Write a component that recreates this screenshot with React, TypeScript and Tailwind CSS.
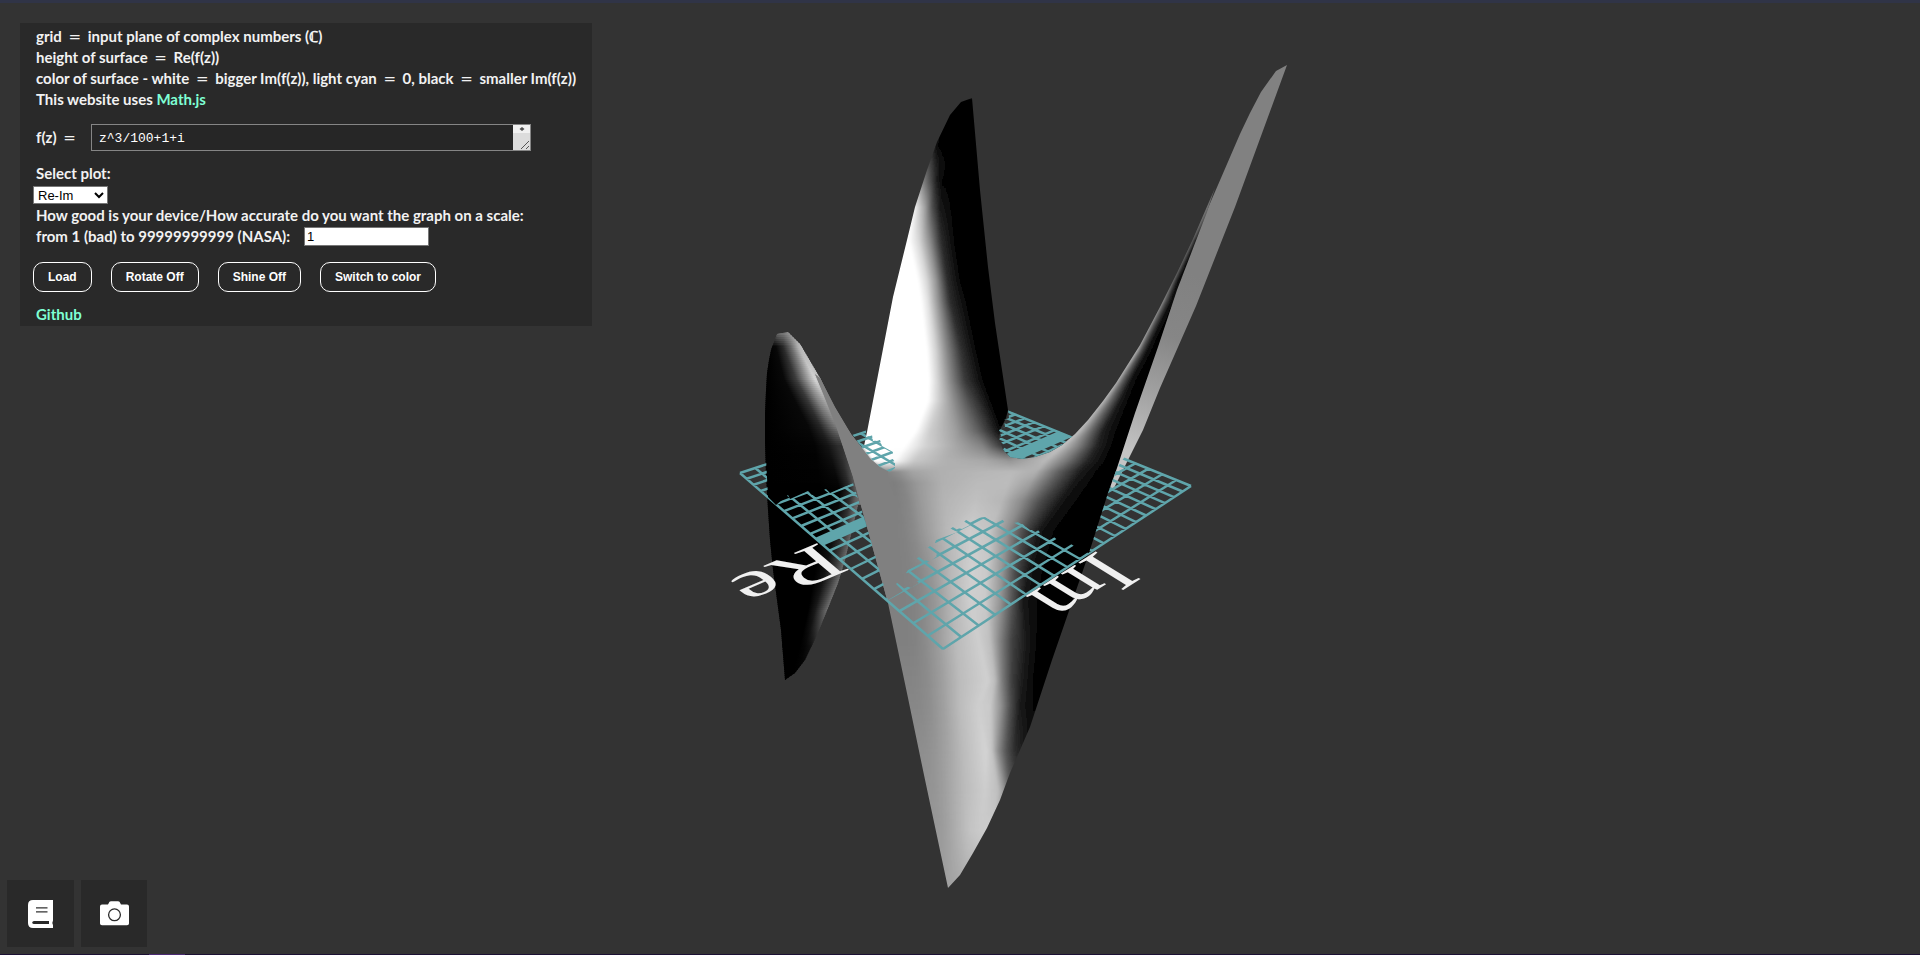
import { useMemo, useState } from "react";

type Stop = [number, number];
type Row = [number, Stop[]];

// Brightness of the surface along horizontal slices: [y, [[x, grey], ...]]
const bodyRows: Row[] = [
  [98, [[930, 0], [931, 0], [932, 0], [940, 0], [950, 0], [960, 0], [970, 0], [980, 0], [1280, 0], [1290, 0], [1300, 0], [1310, 0]]],
  [145, [[915, 0], [925, 20], [928, 20], [935, 18], [939, 3], [944, 0], [955, 0], [965, 0], [1232, 128], [1237, 110], [1242, 60], [1252, 30]]],
  [180, [[890, 120], [900, 120], [905, 120], [924, 125], [932, 65], [937, 25], [943, 3], [952, 0], [1212, 128], [1216, 110], [1220, 60], [1226, 30]]],
  [207, [[880, 240], [900, 240], [905, 250], [915, 238], [925, 160], [932, 80], [940, 25], [954, 0], [1205, 128], [1208, 110], [1211, 60], [1216, 30]]],
  [240, [[870, 255], [880, 255], [890, 255], [909, 255], [919, 215], [930, 140], [941, 45], [956, 0], [1189, 140], [1192, 100], [1195, 30], [1199, 0]]],
  [280, [[870, 255], [880, 255], [890, 255], [918, 255], [927, 215], [936, 150], [947, 45], [962, 0], [1170, 170], [1174, 80], [1177, 20], [1182, 0]]],
  [300, [[870, 255], [875, 255], [885, 255], [921, 255], [928, 225], [939, 140], [950, 45], [968, 0], [1161, 180], [1165, 90], [1170, 20], [1176, 0]]],
  [350, [[860, 255], [870, 255], [880, 255], [927, 255], [936, 210], [947, 135], [961, 50], [978, 0], [1136, 190], [1140, 95], [1146, 20], [1153, 0]]],
  [380, [[810, 128], [845, 128], [846, 255], [929, 255], [937, 215], [949, 145], [965, 58], [985, 0], [1116, 195], [1122, 100], [1130, 20], [1138, 0]]],
  [400, [[820, 128], [848, 128], [849, 255], [928, 255], [938, 210], [953, 145], [970, 75], [992, 0], [1102, 195], [1110, 105], [1120, 25], [1130, 0]]],
  [430, [[830, 128], [850, 128], [851, 255], [916, 255], [930, 205], [955, 160], [977, 100], [1001, 8], [1078, 195], [1090, 110], [1103, 30], [1119, 0]]],
  [445, [[835, 128], [861, 128], [862, 255], [905, 255], [926, 210], [952, 172], [983, 130], [1001, 60], [1062, 195], [1079, 125], [1097, 35], [1114, 0]]],
  [460, [[845, 128], [872, 128], [873, 255], [895, 250], [914, 200], [945, 177], [985, 168], [1010, 150], [1045, 185], [1066, 120], [1088, 35], [1108, 0]]],
  [471, [[850, 128], [886, 128], [889, 132], [897, 140], [912, 163], [942, 176], [980, 182], [1012, 186], [1036, 175], [1057, 100], [1080, 28], [1100, 0]]],
  [482, [[852, 128], [888, 128], [894, 126], [902, 132], [917, 152], [942, 176], [978, 186], [1008, 188], [1030, 160], [1052, 88], [1074, 22], [1094, 0]]],
  [500, [[858, 128], [892, 128], [898, 128], [908, 134], [922, 155], [944, 180], [976, 192], [1002, 182], [1022, 138], [1042, 72], [1062, 20], [1082, 0]]],
  [530, [[866, 128], [896, 128], [904, 130], [914, 138], [926, 155], [946, 183], [970, 205], [990, 196], [1008, 142], [1024, 72], [1040, 20], [1060, 0]]],
  [570, [[878, 128], [900, 128], [910, 130], [920, 136], [932, 150], [950, 183], [972, 208], [987, 202], [1002, 150], [1015, 75], [1030, 20], [1048, 0]]],
  [600, [[888, 128], [904, 128], [914, 130], [924, 137], [936, 152], [952, 181], [970, 206], [985, 203], [1000, 150], [1012, 85], [1023, 24], [1042, 0]]],
  [640, [[896, 128], [906, 128], [915, 130], [925, 138], [938, 155], [956, 186], [979, 206], [990, 190], [1001, 125], [1012, 65], [1027, 24], [1040, 0]]],
  [680, [[904, 132], [910, 132], [918, 134], [928, 140], [942, 158], [960, 188], [988, 208], [995, 188], [1002, 125], [1012, 62], [1022, 28], [1036, 0]]],
  [705, [[908, 135], [914, 135], [920, 136], [930, 142], [944, 160], [960, 188], [978, 206], [990, 202], [1001, 145], [1010, 80], [1020, 25], [1034, 5]]],
  [750, [[916, 140], [922, 142], [928, 144], [936, 150], [948, 164], [964, 188], [986, 212], [992, 195], [998, 140], [1006, 85], [1014, 48], [1026, 18]]],
  [790, [[924, 145], [930, 147], [936, 150], [944, 158], [954, 172], [966, 188], [985, 205], [998, 190], [1004, 150], [1010, 90], [1018, 60], [1026, 30]]],
  [830, [[930, 150], [936, 152], [942, 155], [950, 165], [960, 180], [970, 195], [980, 202], [990, 205], [1000, 205], [1010, 205], [1018, 205], [1026, 205]]],
  [888, [[940, 158], [943, 160], [946, 160], [950, 162], [956, 164], [962, 168], [970, 172], [980, 180], [990, 180], [1000, 180], [1018, 180], [1026, 180]]],
];

const petalRows: Row[] = [
  [331, [[773, 60], [778, 115], [784, 130], [789, 150], [795, 170], [802, 180]]],
  [346, [[768, 0], [776, 8], [783, 40], [791, 105], [798, 175], [804, 200]]],
  [378, [[768, 0], [784, 8], [796, 60], [807, 150], [815, 215], [820, 190]]],
  [400, [[768, 0], [795, 8], [808, 55], [818, 130], [825, 165], [830, 135]]],
  [425, [[768, 0], [808, 8], [820, 38], [829, 90], [835, 120], [839, 128]]],
  [445, [[768, 0], [815, 3], [828, 20], [838, 45], [843, 50], [848, 60]]],
  [490, [[768, 0], [820, 0], [840, 2], [850, 40], [856, 90], [862, 120]]],
  [530, [[768, 0], [820, 0], [835, 15], [845, 55], [852, 100], [858, 120]]],
  [570, [[768, 0], [815, 0], [825, 15], [834, 55], [841, 100], [846, 125]]],
  [610, [[768, 0], [808, 0], [815, 25], [822, 75], [827, 110], [830, 120]]],
  [645, [[768, 0], [800, 0], [805, 5], [810, 15], [814, 30], [818, 40]]],
  [682, [[768, 0], [790, 0], [795, 0], [800, 0], [810, 0], [818, 0]]],
];

const STEP = 2;

// Keeps a dark stretch dark up to the next bright edge
function holdDark(stops: Stop[]): Stop[] {
  return stops.flatMap((s, i) => {
    const next = stops[i + 1];
    return next && s[1] < 15 && next[0] - s[0] > 60 ? [s, [next[0] - 12, s[1]] as Stop] : [s];
  });
}

function ShadedRows({ id, rows, x1, x2 }: { id: string; rows: Row[]; x1: number; x2: number }) {
  const strips = useMemo(() => {
    const out: { y: number; stops: Stop[] }[] = [];
    for (let k = 0; k < rows.length - 1; k++) {
      const [ya, a] = rows[k];
      const [yb, b] = rows[k + 1];
      for (let y = ya; y < yb; y += STEP) {
        const t = (y - ya) / (yb - ya);
        out.push({
          y,
          stops: holdDark(a.map(([x, g], i) => [x + (b[i][0] - x) * t, g + (b[i][1] - g) * t] as Stop)),
        });
      }
    }
    return out;
  }, [rows]);
  return (
    <g shapeRendering="crispEdges">
      {strips.map(({ y, stops }) => (
        <g key={y}>
          <linearGradient id={`${id}-${y}`} gradientUnits="userSpaceOnUse" x1={x1} x2={x2} y1={0} y2={0}>
            {stops.map(([x, g], i) => {
              const v = Math.round(g);
              return <stop key={i} offset={(x - x1) / (x2 - x1)} stopColor={`rgb(${v},${v},${v})`} />;
            })}
          </linearGradient>
          <rect x={x1} y={y} width={x2 - x1} height={STEP + 1} fill={`url(#${id}-${y})`} />
        </g>
      ))}
    </g>
  );
}

// Corners of the input plane on screen: near, right, far, left
const P: Stop[] = [[943, 649], [1191, 486], [972, 397], [740, 473]];

function project(u: number, v: number): Stop {
  const [[x0, y0], [x1, y1], [x2, y2], [x3, y3]] = P;
  const dx1 = x1 - x2, dx2 = x3 - x2, sx = x0 - x1 + x2 - x3;
  const dy1 = y1 - y2, dy2 = y3 - y2, sy = y0 - y1 + y2 - y3;
  const det = dx1 * dy2 - dx2 * dy1;
  const g = (sx * dy2 - dx2 * sy) / det;
  const h = (dx1 * sy - sx * dy1) / det;
  const w = g * u + h * v + 1;
  return [
    ((x1 - x0 + g * x1) * u + (x3 - x0 + h * x3) * v + x0) / w,
    ((y1 - y0 + g * y1) * u + (y3 - y0 + h * y3) * v + y0) / w,
  ];
}

const CELLS = 20;

function Grid() {
  const ticks = Array.from({ length: CELLS + 1 }, (_, i) => i / CELLS);
  const seg = (a: Stop, b: Stop) => `M${a[0].toFixed(1)} ${a[1].toFixed(1)}L${b[0].toFixed(1)} ${b[1].toFixed(1)}`;
  const d = ticks.map((t) => seg(project(t, 0), project(t, 1)) + seg(project(0, t), project(1, t))).join("");
  const axis = [project(0, 0.48), project(1, 0.47), project(1, 0.535), project(0, 0.525)].join(" ");
  return (
    <g clipPath="url(#grid-visible)">
      <path d={d} fill="none" stroke="#5fa5ab" strokeWidth="2.5" />
      <polygon points={axis} fill="#5fa5ab" />
    </g>
  );
}

function Plot() {
  return (
    <svg viewBox="0 0 1920 955" className="absolute inset-0 h-full w-full" role="img" aria-label="Surface plot">
      <defs>
        <clipPath id="petal">
          <polygon points="785,680 781,630 777,600 773,570 770,540 768,510 766,475 765,443 765,413 766,390 767,373 769,360 771,350 777,334 788,332 800,344 820,378 837,413 850,433 880,500 858,505 845,560 838,583 830,603 817,635 805,660 795,673" />
        </clipPath>
        <clipPath id="body">
          <polygon points="948,888 924,775 908,698 888,603 867,527 853,477 835,423 823,393 815,374 820,378 835,407 851,434 862,448 864,446 867,432 893,297 907,240 915,207 927,170 937,142 950,115 961,102 972,98 980,190 988,267 995,323 1008,410 1006,418 1001,428 999,438 1003,450 1010,457 1022,459 1035,457 1050,452 1062,445 1075,434 1088,420 1103,401 1116,383 1140,345 1160,307 1177,273 1193,239 1215,188 1207,212 1197,238 1177,290 1158,347 1135,413 1117,468 1108,493 1089,553 1052,660 1030,727 1010,773 1000,800 987,828 973,853 960,875" />
        </clipPath>
        <clipPath id="grid-visible">
          <path d="M734 474L766 458L768 497L776 505L788 495L790 499L808 491L812 495L826 489L830 493L853 483L867 527L888 600L903 591L896 584L898 582L911 588L919 583L906 573L908 570L922 563L916 559L919 557L930 562L937 556L927 548L930 546L942 550L948 545L935 543L936 540L958 532L950 529L953 527L962 529L970 525L964 522L966 520L976 518L985 517L992 521L1002 519L1006 524L1020 522L1030 530L1038 530L1044 537L1054 537L1062 544L1071 544L1080 550L1089 553L1108 493L1117 468L1126 455L1196 480L1196 492L943 653Z" />
          <polygon points="852,434 866,430 866,437 872,435 873,441 880,440 882,446 893,452 892,458 895,462 895,468 890,472 880,467 870,458 862,448" />
          <polygon points="1008,410 1075,434 1062,445 1050,452 1035,457 1022,459 1010,457 1003,450 1005,446 999,440 1001,436 999,430 1005,427 1004,420 1009,418" />
        </clipPath>
        <clipPath id="ridge">
          <polygon points="805,360 820,378 835,407 851,434 862,448 870,458 880,467 888,471 888,500 888,603 860,600" />
        </clipPath>
        <linearGradient id="sheet" gradientUnits="userSpaceOnUse" x1="1180" y1="270" x2="1120" y2="450">
          <stop offset="0" stopColor="#818181" />
          <stop offset="0.35" stopColor="#868686" />
          <stop offset="0.65" stopColor="#a0a0a0" />
          <stop offset="1" stopColor="#c4c4c4" />
        </linearGradient>
        <filter id="soft" x="-5%" y="-5%" width="110%" height="110%">
          <feGaussianBlur stdDeviation="1.2" />
        </filter>
      </defs>

      <polygon points="1287,65 1276,71 1261,92 1250,113 1240,134 1221,178 1205,215 1180,275 1150,340 1130,400 1105,480 1113,490 1128,460 1143,430 1160,388 1196,306 1235,207" fill="url(#sheet)" />

      <g clipPath="url(#petal)">
        <ShadedRows id="pr" rows={petalRows} x1={760} x2={885} />
      </g>

      <g clipPath="url(#body)">
        <g filter="url(#soft)">
          <ShadedRows id="br" rows={bodyRows} x1={800} x2={1320} />
        </g>
        <polygon points="810,365 820,378 835,407 851,434 862,448 870,458 880,467 893,473 903,490 905,530 900,600 860,600 853,477 835,423" fill="#808080" clipPath="url(#ridge)" />
      </g>

      <Grid />

      <g fill="#f0f0f0" fontFamily="'Liberation Serif', serif" fontSize="60">
        <text transform="matrix(-1.1 0.7 -1.14 -0.7 1098 550)">Im</text>
        <text transform="matrix(-1.42 0.6 -0.8 -0.68 820 542)">Re</text>
      </g>
    </svg>
  );
}

function Eq() {
  return <span className="mx-[3px] font-['DejaVu_Sans',sans-serif] leading-none font-normal">=</span>;
}

const outlined =
  "h-[30px] rounded-[10px] border border-white px-[14px] text-[12px] font-bold leading-none text-white hover:bg-white/10";

export default function App() {
  const [rotate, setRotate] = useState(true);
  const [shine, setShine] = useState(true);
  const [grey, setGrey] = useState(true);
  return (
    <div className="relative flex min-h-screen flex-col overflow-hidden bg-[#333333] font-['Liberation_Sans',sans-serif] text-white">
      <Plot />
      <div className="relative h-[3px] bg-[#303447]" />

      <section className="relative mt-5 ml-5 flex w-[572px] flex-col items-start bg-[#292929] pt-[3px] pb-[1px] font-['Lato',sans-serif] text-[15px] leading-[21px] font-bold text-[#f2f2f2]">
        <div className="pl-4 whitespace-nowrap">
          <p>grid <Eq /> input plane of complex numbers (ℂ)</p>
          <p>height of surface <Eq /> Re(f(z))</p>
          <p>color of surface - white <Eq /> bigger Im(f(z)), light cyan <Eq /> 0, black <Eq /> smaller Im(f(z))</p>
          <p>
            This website uses{" "}
            <a href="https://mathjs.org" className="text-[#7fffd4]">Math.js</a>
          </p>
        </div>

        <div className="mt-[14px] flex items-center pl-4">
          <label htmlFor="fn" className="w-[55px]">f(z) <Eq /></label>
          <div className="relative flex">
            <textarea
              id="fn"
              rows={1}
              defaultValue="z^3/100+1+i"
              className="h-[27px] w-[440px] resize-none overflow-hidden border border-[#858585] bg-[#262626] px-[7px] pt-[6px] font-['Liberation_Mono',monospace] text-[13px] leading-4 font-normal text-white"
            />
            <div className="absolute inset-y-px right-px flex w-[17px] flex-col bg-[#dcdcdc]">
              <div className="h-2 bg-[#f1f1f1]" />
              <svg viewBox="0 0 17 25" className="absolute inset-0 h-full w-full" aria-hidden="true">
                <path d="M6.5 4L9 2L11.5 4L9 6Z" fill="#505050" />
                <path d="M8 24L16 16M13 24L16 21" stroke="#555" strokeWidth="1" />
              </svg>
            </div>
          </div>
        </div>

        <label htmlFor="plot" className="mt-3 pl-4">Select plot:</label>
        <select
          id="plot"
          className="mt-[2px] ml-[13px] h-[18px] w-[75px] border border-[#767676] bg-white font-['Liberation_Sans',sans-serif] text-[13px] leading-none font-normal text-black"
        >
          <option>Re-Im</option>
          <option>Abs-Arg</option>
        </select>

        <div className="mt-px pl-4">
          <p>How good is your device/How accurate do you want the graph on a scale:</p>
          <div className="flex items-center gap-[14px]">
            <label htmlFor="quality">from 1 (bad) to 99999999999 (NASA):</label>
            <input
              id="quality"
              defaultValue="1"
              className="h-[19px] w-[125px] border border-[#767676] bg-white px-[2px] font-['Liberation_Sans',sans-serif] text-[13px] font-normal text-black"
            />
          </div>
        </div>

        <div className="mt-[15px] ml-[13px] flex gap-[19px] font-['Liberation_Sans',sans-serif]">
          <button className={outlined}>Load</button>
          <button className={outlined} onClick={() => setRotate(!rotate)}>{rotate ? "Rotate Off" : "Rotate On"}</button>
          <button className={outlined} onClick={() => setShine(!shine)}>{shine ? "Shine Off" : "Shine On"}</button>
          <button className={outlined} onClick={() => setGrey(!grey)}>{grey ? "Switch to color" : "Switch to grey"}</button>
        </div>

        <a href="https://github.com" className="mt-3 ml-4 text-[#7fffd4]">Github</a>
      </section>

      <div className="relative mt-auto mb-[7px] ml-[7px] flex gap-[7px]">
        <button aria-label="Documentation" className="flex h-[67px] w-[67px] items-center justify-center bg-[#292929]">
          <svg viewBox="0 0 25 28" className="h-7 w-[25px]">
            <path d="M5 0H25V20.500Q23.800 22.500 25 25V28H5Q0 28 0 23V5Q0 0 5 0Z" fill="#fff" />
            <path d="M8 7.800H19.500M8 11.800H19.500" stroke="#333" strokeWidth="1.300" />
            <path d="M6 21H21V24H6Q4.300 24 4.300 22.500Q4.300 21 6 21Z" fill="#292929" />
          </svg>
        </button>
        <button aria-label="Take picture" className="flex h-[67px] w-[66px] items-center justify-center bg-[#292929]">
          <svg viewBox="0 0 29 25" className="h-[25px] w-[29px]">
            <path d="M2 3.500H8L9.500 0.800Q10 0.200 11 0.200H18Q19 0.200 19.500 0.800L21 3.500H27Q29 3.500 29 5.500V22.500Q29 24.300 27 24.300H2Q0 24.300 0 22.500V5.500Q0 3.500 2 3.500Z" fill="#fff" />
            <circle cx="14.500" cy="13.800" r="5.900" fill="none" stroke="#2b2b2b" strokeWidth="1.300" />
          </svg>
        </button>
      </div>
      <div className="relative h-px bg-[#1c1033]">
        <div className="ml-[149px] h-px w-9 bg-[#4b2a73]" />
      </div>
    </div>
  );
}
